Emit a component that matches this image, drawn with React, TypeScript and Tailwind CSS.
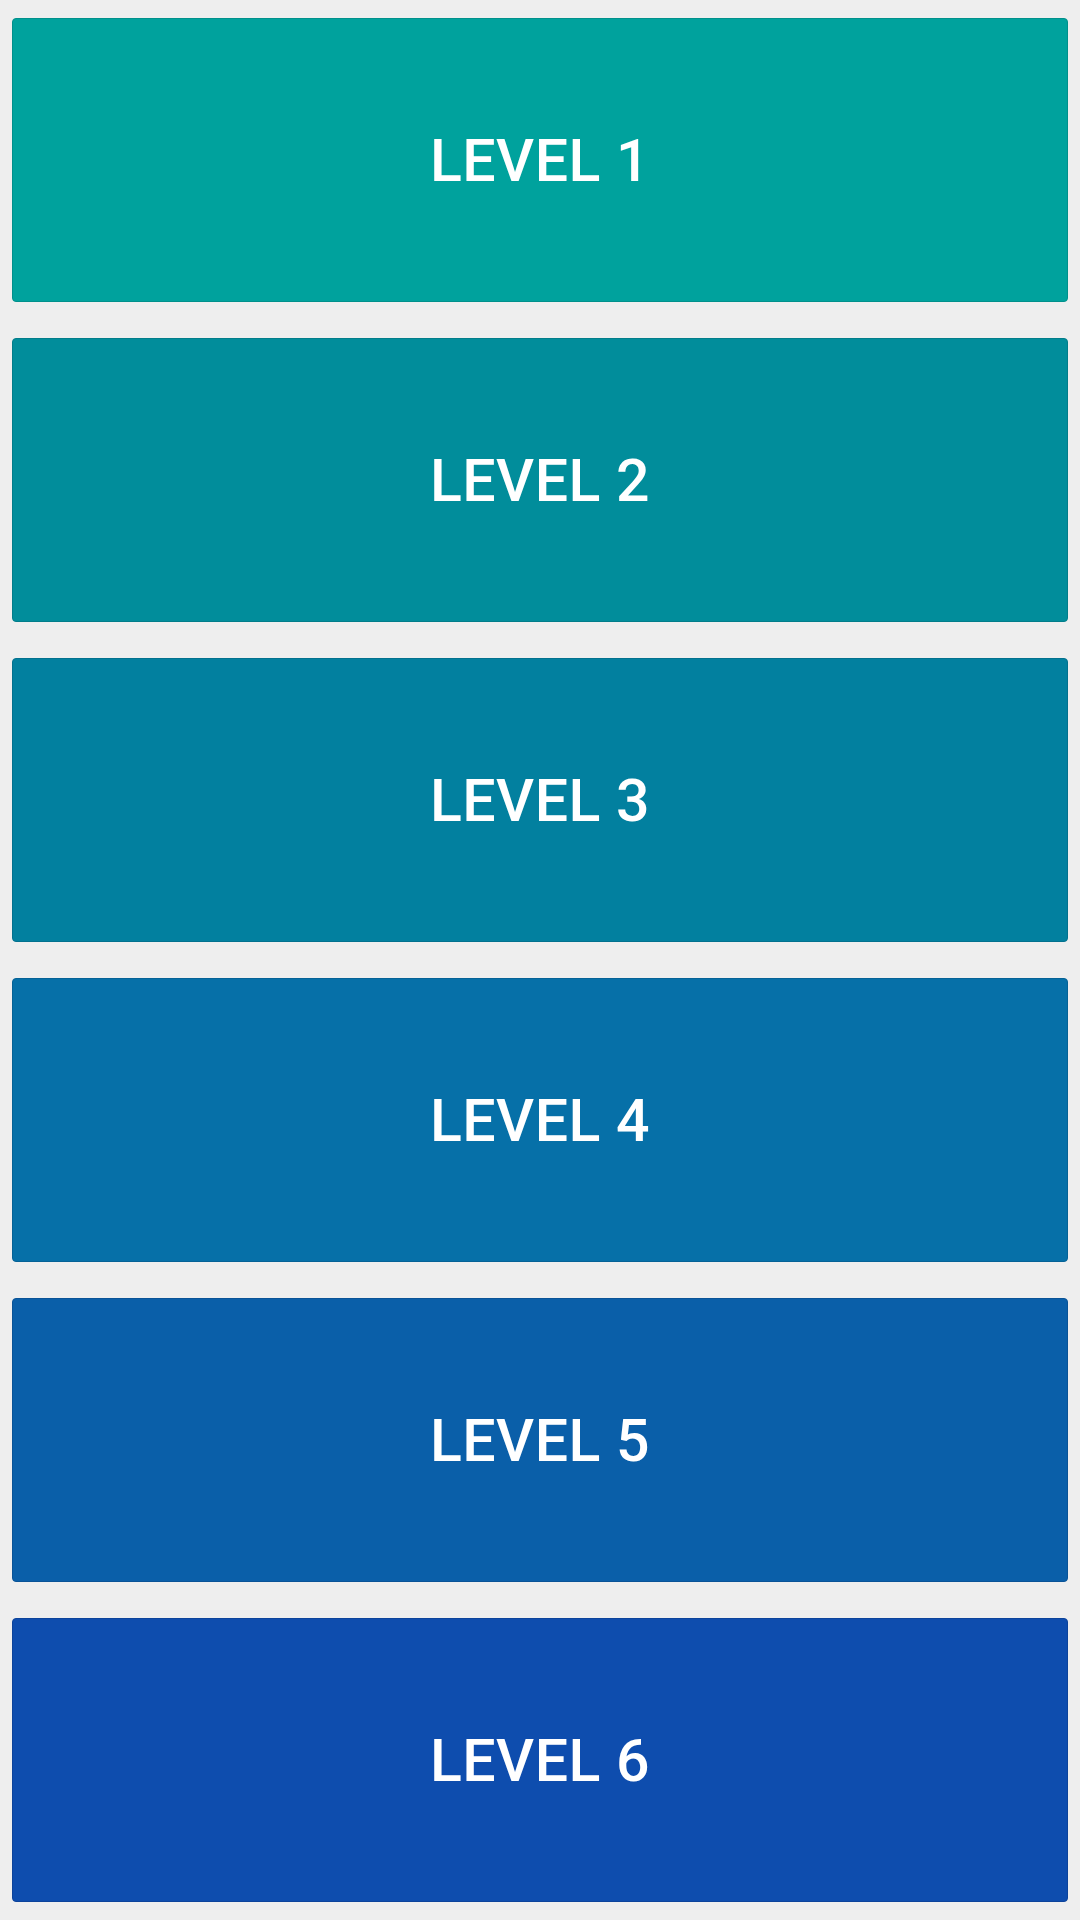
const levels = [
  { n: 1, cls: "bg-[#00a29d] border-[#00908b]" },
  { n: 2, cls: "bg-[#018d9b] border-[#017d8a]" },
  { n: 3, cls: "bg-[#02809f] border-[#02718e]" },
  { n: 4, cls: "bg-[#0670a8] border-[#056296]" },
  { n: 5, cls: "bg-[#0a5fa9] border-[#095397]" },
  { n: 6, cls: "bg-[#0e4dae] border-[#0c439b]" },
];

export default function App() {
  return (
    <div className="min-h-[1920px] w-[1080px] bg-[#eeeeee] px-3 pt-[18px] pb-[18px] font-['Roboto',sans-serif]">
      <div className="flex flex-col gap-9">
        {levels.map((l) => (
          <div
            key={l.n}
            className={`h-[284px] rounded-[4px] border flex items-center justify-center ${l.cls}`}
          >
            <span className="text-white text-[59px] font-medium leading-none tracking-[0.5px]">
              LEVEL {l.n}
            </span>
          </div>
        ))}
      </div>
    </div>
  );
}
